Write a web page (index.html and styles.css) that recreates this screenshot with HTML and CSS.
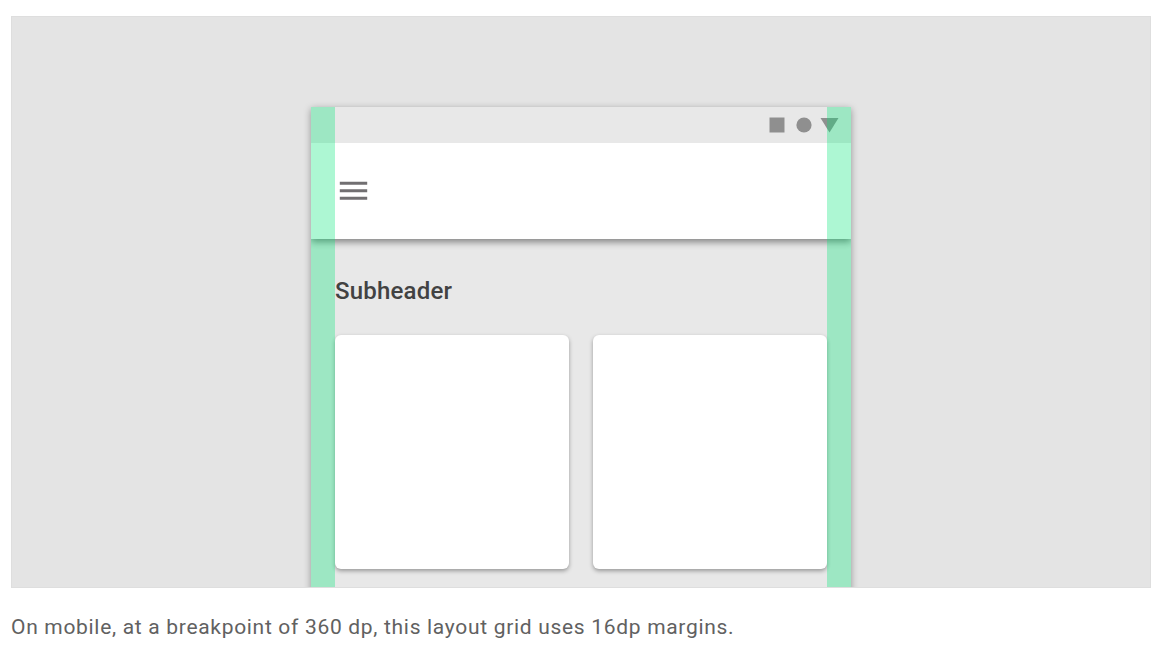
FILE: index.html
```
<!DOCTYPE html>
<html lang="en">
<head>
    <meta charset="UTF-8">
    <meta name="viewport" content="width=device-width, initial-scale=1.0">
    <title>Layout grid margins</title>
    <link rel="stylesheet" href="styles.css">
</head>
<body>
    <figure class="figure">
        <div class="stage">
            <div class="phone">
                <div class="status-bar">
                    <svg width="72" height="18" viewBox="0 0 72 18">
                        <rect x="1.5" y="1.5" width="15" height="15"/>
                        <circle cx="36" cy="9" r="7.6"/>
                        <path d="M52.5 2h18L61.5 16.6z"/>
                    </svg>
                </div>
                <div class="app-bar">
                    <svg class="menu-icon" width="29" height="20" viewBox="0 0 29 20">
                        <path d="M0.8 0.8h27.4v2.9H0.8zM0.8 8.3h27.4v2.9H0.8zM0.8 15.8h27.4v2.9H0.8z"/>
                    </svg>
                </div>
                <div class="content">
                    <h3 class="subheader">Subheader</h3>
                    <div class="cards">
                        <div class="card"></div>
                        <div class="card"></div>
                    </div>
                </div>
                <!-- 16dp margins -->
                <div class="margin margin-left"></div>
                <div class="margin margin-right"></div>
            </div>
        </div>
        <figcaption class="caption">On mobile, at a breakpoint of 360 dp, this layout grid uses 16dp margins.</figcaption>
    </figure>
</body>
</html>
```
FILE: styles.css
```
body {
    margin: 0;
    background-color: #fff;
    font-family: Roboto, Arial, sans-serif;
}
.figure {
    width: 1140px;
    margin: 0;
    padding: 16px 0 0 11px;
}
.stage {
    box-sizing: border-box;
    height: 572px;
    padding-top: 90px;
    display: flex;
    justify-content: center;
    border: 1px solid #dedede;
    background-color: #e4e4e4;
    overflow: hidden;
}
.phone {
    position: relative;
    width: 540px;
    height: 520px;
    background-color: #e8e8e8;
    box-shadow: 0 2px 7px rgba(0,0,0,0.36);
}
.status-bar {
    box-sizing: border-box;
    height: 36px;
    padding-right: 11px;
    display: flex;
    align-items: center;
    justify-content: flex-end;
    fill: #8f8f8f;
}
.app-bar {
    box-sizing: border-box;
    height: 96px;
    padding-left: 28px;
    padding-bottom: 1px;
    display: flex;
    align-items: center;
    background-color: #fff;
    box-shadow: 0 3px 7px rgba(0,0,0,0.45);
    clip-path: inset(0 0 -14px 0);
}
.menu-icon {
    fill: #716f71;
}
.content {
    padding: 36px 24px 0;
}
.subheader {
    margin: 0;
    height: 60px;
    line-height: 32px;
    font-size: 24px;
    font-weight: 500;
    letter-spacing: 0.2px;
    color: #424242;
}
.cards {
    display: grid;
    grid-template-columns: 1fr 1fr;
    gap: 24px;
}
.card {
    height: 234px;
    border-radius: 6px;
    background-color: #fff;
    box-shadow: 0 2px 4px rgba(0,0,0,0.35);
}
.margin {
    position: absolute;
    top: 0;
    bottom: 0;
    width: 24px;
    background-color: rgba(0,230,118,0.32);
}
.margin-left {
    left: 0;
}
.margin-right {
    right: 0;
}
.caption {
    margin-top: 23px;
    line-height: 32px;
    font-size: 21px;
    letter-spacing: 0.69px;
    color: #616161;
    white-space: nowrap;
}
```
